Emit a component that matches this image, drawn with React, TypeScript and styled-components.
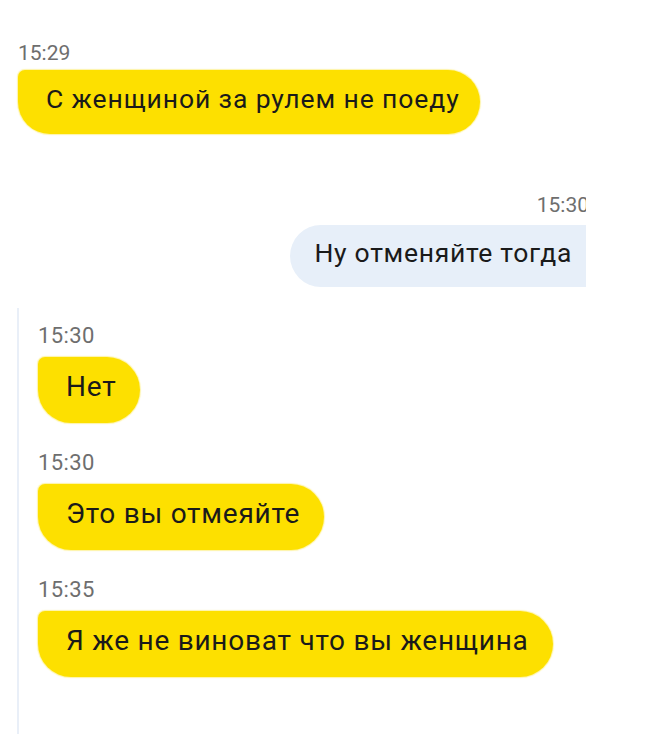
import React from "react";
import styled, { createGlobalStyle } from "styled-components";

const GlobalStyle = createGlobalStyle`
  html, body {
    margin: 0;
    padding: 0;
    background: #fff;
  }
  body {
    font-family: Roboto, "Liberation Sans", Arial, sans-serif;
    color: #1b1b1b;
  }
`;

type Msg = { time: string; text: string };

const topIncoming: Msg = { time: "15:29", text: "С женщиной за рулем не поеду" };
const topOutgoing: Msg = { time: "15:30", text: "Ну отменяйте тогда" };

const bottomMessages: Msg[] = [
  { time: "15:30", text: "Нет" },
  { time: "15:30", text: "Это вы отмеяйте" },
  { time: "15:35", text: "Я же не виноват что вы женщина" },
];

const App = () => {
  return (
    <>
      <GlobalStyle />
      <Page>
        <TopShot>
          <Message $align="start" $gap={5}>
            <Time $size={21}>{topIncoming.time}</Time>
            <Bubble $variant="driver" $size={26.5} $spacing={0.9} $height={64} $padRight={20}>
              {topIncoming.text}
            </Bubble>
          </Message>
          <Message $align="end" $gap={8} $pull>
            <Time $size={21} $inset={9}>
              {topOutgoing.time}
            </Time>
            <Bubble $variant="me" $size={26.5} $spacing={0.7} $height={62} $padRight={26}>
              {topOutgoing.text}
            </Bubble>
          </Message>
        </TopShot>
        <BottomShot>
          {bottomMessages.map((m, i) => (
            <Message key={i} $align="start" $gap={9}>
              <Time $size={22} $spacing={0.4}>
                {m.time}
              </Time>
              <Bubble $variant="driver" $size={28} $spacing={0.75} $height={66} $padRight={24}>
                {m.text}
              </Bubble>
            </Message>
          ))}
        </BottomShot>
      </Page>
    </>
  );
};

export default App;

const Page = styled.div`
  width: 648px;
  height: 734px;
  overflow: hidden;
  background: #fff;
`;

const TopShot = styled.div`
  width: 568px;
  padding: 41px 0 21px 18px;
  display: flex;
  flex-direction: column;
  gap: 59px;
  overflow: hidden;
`;

const BottomShot = styled.div`
  margin-left: 17px;
  border-left: 2px solid #e9eff8;
  padding: 16px 0 60px 19px;
  display: flex;
  flex-direction: column;
  gap: 28px;
`;

const Message = styled.div<{ $align: "start" | "end"; $gap: number; $pull?: boolean }>`
  display: flex;
  flex-direction: column;
  align-items: ${(p) => (p.$align === "end" ? "flex-end" : "flex-start")};
  gap: ${(p) => p.$gap}px;
  margin-right: ${(p) => (p.$pull ? "-12px" : "0")};
`;

const Time = styled.div<{ $size: number; $inset?: number; $spacing?: number }>`
  font-size: ${(p) => p.$size}px;
  letter-spacing: ${(p) => p.$spacing || 0}px;
  line-height: 24px;
  color: #6e6e6e;
  padding-right: ${(p) => p.$inset || 0}px;
  white-space: nowrap;
`;

const Bubble = styled.div<{
  $variant: "driver" | "me";
  $size: number;
  $spacing: number;
  $height: number;
  $padRight: number;
}>`
  box-sizing: border-box;
  height: ${(p) => p.$height}px;
  font-size: ${(p) => p.$size}px;
  letter-spacing: ${(p) => p.$spacing}px;
  line-height: ${(p) => p.$height - 6}px;
  padding: 0 ${(p) => p.$padRight}px 6px ${(p) => (p.$variant === "me" ? 25 : 28)}px;
  white-space: nowrap;
  color: #1a1a1a;
  background: ${(p) => (p.$variant === "me" ? "#e7eff9" : "#fde000")};
  border-radius: ${(p) =>
    p.$variant === "me" ? "31px 8px 8px 31px" : "7px 33px 33px 33px"};
  box-shadow: ${(p) =>
    p.$variant === "me" ? "none" : "0 0 1px 1px rgba(253, 224, 0, 0.35)"};
`;
